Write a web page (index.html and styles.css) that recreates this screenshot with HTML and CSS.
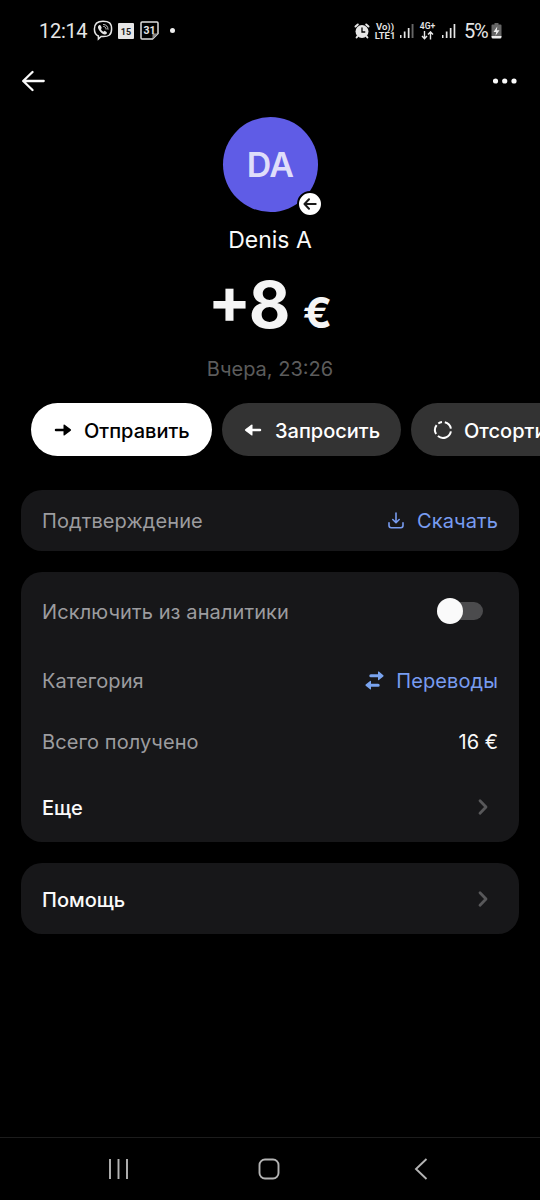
FILE: index.html
```html
<!DOCTYPE html>
<html lang="ru">
<head>
<meta charset="utf-8">
<title>Denis A</title>
<link rel="stylesheet" href="styles.css">
</head>
<body>
<div class="screen">
  <div class="status">
    <span class="clock">12:14</span>
    <svg class="s-viber" width="20" height="21" viewBox="0 0 20 21" fill="none" stroke="#e6e6e6" stroke-width="1.5" stroke-linecap="round">
      <path d="M10 1.300C4 1.300 1.400 3.500 1.400 9c0 3.700 1.200 5.900 4 7v3l2.700-2.500c7.500.7 10.500-1.500 10.500-7.500S16 1.300 10 1.300z"/>
      <path d="M6 5.200c-1.700 1-1.200 3.200.5 5.500s4.200 4.100 5.700 3.800c1.700-.3 2.200-1.800 1.300-2.500l-1.800-1.200-1.300.9c-1-.3-2.100-1.500-2.400-2.700l.8-1-1-2.300c-.4-.6-1.100-.9-1.800-.5z" fill="#e6e6e6" stroke="none"/>
      <path d="M10.500 4.500c3 .2 4.500 2 4.500 4.800M10.700 6.500c1.500.1 2.400 1.100 2.400 2.600" stroke-width=".9"/>
    </svg>
    <span class="cal-solid">15</span>
    <span class="cal31">
      <svg width="19" height="19" viewBox="0 0 19 19" fill="none" stroke="#dedede" stroke-width="1.500"><path d="M2.500 1h14.500q1 0 1 1v10.500l-5.500 5.500H2q-1 0-1-1V2q0-1 1-1z"/><path d="M18 12.500l-5.500 5.500v-5.500z" fill="#888" stroke="none"/></svg>
      <b>31</b>
    </span>
    <i class="dot"></i>
    <svg class="s-alarm" width="16" height="16" viewBox="0 0 16 16" fill="none" stroke="#e6e6e6" stroke-width="2" stroke-linecap="round">
      <circle cx="8" cy="8.500" r="6.500" fill="#e6e6e6" stroke="none"/><path d="M1.500 3.500l2.300-2M14.500 3.500l-2.300-2M3.600 13.200l-1 1.300M12.400 13.200l1 1.300"/><path d="M8 5v4h2.800" stroke="#000" stroke-width="1.300"/>
    </svg>
    <span class="net volte"><span>Vo))</span><span>LTE1</span></span>
    <svg class="sig" width="14" height="16" viewBox="0 0 14 16" fill="#e6e6e6"><path d="M0 12h1.500v3H0zM3.800 8.500h1.700V15H3.800zM7.800 5h1.700v10H7.800z"/><path d="M11.600 1h1.900v14h-1.900z" fill="#666"/></svg>
    <span class="net fourg"><span>4G+</span>
      <svg width="13" height="9" viewBox="0 0 13 9" fill="none" stroke="#e6e6e6" stroke-width="1.400"><path d="M3.500 0v7.500M1 5l2.500 2.700L6 5M9.500 8.500V1M7 3.500L9.500.9 12 3.500"/></svg></span>
    <svg class="sig" width="14" height="16" viewBox="0 0 14 16" fill="#e6e6e6"><path d="M0 12h1.500v3H0zM3.800 8.500h1.700V15H3.800zM7.800 5h1.700v10H7.800zM11.600 1h1.700v14h-1.700z"/></svg>
    <span class="pct">5%</span>
    <svg class="bat" width="11" height="16" viewBox="0 0 11 16"><path d="M3.500 0h4v1.500H9.500q1 0 1 1v11H.5v-11q0-1 1-1h2z" fill="#666"/><path d="M.5 13h10v1q0 1.500-1.500 1.500H2Q.5 15.500.5 14z" fill="#eee"/><path d="M6.300 3.500L2.500 9h2.700l-.7 3.700L8.500 7.300H5.800z" fill="#eee"/></svg>
  </div>

  <div class="topbar">
    <svg width="24" height="22" viewBox="0 0 24 22" fill="none" stroke="#fafafa" stroke-width="2.300" stroke-linecap="round" stroke-linejoin="round"><path d="M21.700 11H1.500M10.500 2L1.200 11l9.300 9"/></svg>
    <svg width="26" height="6" viewBox="0 0 26 6" fill="#fafafa"><circle cx="2.500" cy="3" r="2.600"/><circle cx="11.700" cy="3" r="2.600"/><circle cx="21" cy="3" r="2.600"/></svg>
  </div>

  <div class="avatar">DA
    <span class="badge"><svg width="14" height="12" viewBox="0 0 14 12" fill="none" stroke="#191919" stroke-width="2" stroke-linecap="round" stroke-linejoin="round"><path d="M12.700 6H1.700M6 1.300L1.500 6 6 10.700"/></svg></span>
  </div>
  <div class="name">Denis A</div>
  <div class="amount"><span class="big">+8</span><span class="cur">€</span></div>
  <div class="date">Вчера, 23:26</div>

  <div class="actions">
    <div class="btn send">
      <svg width="18" height="14" viewBox="0 0 18 14"><path d="M2 7h9" stroke="#000" stroke-width="2.500" stroke-linecap="round"/><path d="M9.500 2.300q0-1.300 1.200-.6l6 4.500q.9.800 0 1.600l-6 4.500q-1.200.7-1.200-.6z" fill="#000"/></svg>
      <span>Отправить</span></div>
    <div class="btn request">
      <svg width="18" height="14" viewBox="0 0 18 14"><path d="M7 7h9" stroke="#fff" stroke-width="2.500" stroke-linecap="round"/><path d="M8.500 2.300q0-1.300-1.200-.6l-6 4.500q-.9.800 0 1.600l6 4.500q1.200.7 1.200-.6z" fill="#fff"/></svg>
      <span>Запросить</span></div>
    <div class="btn sort">
      <svg width="20" height="20" viewBox="0 0 20 20" fill="none" stroke="#fff" stroke-width="2"><path d="M11.800 2.200A8 8 0 0 1 17.900 8.600M17.900 11.400A8 8 0 0 1 4.900 16.100M3.100 14.100A8 8 0 0 1 3.600 5.200M5.300 3.500A8 8 0 0 1 9 2.100"/></svg>
      <span>Отсортировать</span></div>
  </div>

  <div class="card">
    <div class="row r-confirm"><span>Подтверждение</span>
      <span class="link"><svg width="16" height="17" viewBox="0 0 16 17" fill="none" stroke="#789cf0" stroke-width="1.600" stroke-linecap="round" stroke-linejoin="round"><path d="M8 1v9.500M4.800 7.500L8 10.700l3.200-3.200M1 10.800v2.700q0 2.200 2.200 2.200h9.600q2.200 0 2.200-2.200v-2.700"/></svg><span>Скачать</span></span></div>
  </div>
  <div class="card">
    <div class="row r-excl"><span>Исключить из аналитики</span><span class="toggle"><i></i></span></div>
    <div class="row r-cat"><span>Категория</span>
      <span class="link cat"><svg width="19" height="19" viewBox="0 0 19 19" fill="#7aa4ef"><path d="M5.800 3.300H13V1q0-1 .9-.4l4.400 3.600q.7.600 0 1.200l-4.400 3.500q-.9.600-.9-.4V6.300H5.800q-1.500 0-1.500-1.500t1.500-1.500z"/><path d="M13.200 12.700H6v-2.300q0-1-.9-.4L.7 13.600q-.7.600 0 1.200l4.400 3.500q.9.600.9-.4v-2.200h7.200q1.500 0 1.500-1.500t-1.500-1.500z"/></svg><span>Переводы</span></span></div>
    <div class="row r-total"><span>Всего получено</span><span class="sum">16 €</span></div>
    <div class="row r-more"><span class="strong">Еще</span><svg class="chev" width="12" height="18" viewBox="0 0 12 18" fill="none" stroke="#58585a" stroke-width="2.800" stroke-linecap="round" stroke-linejoin="round"><path d="M3 2.800L9 9l-6 6.200"/></svg></div>
  </div>
  <div class="card">
    <div class="row r-help"><span class="strong">Помощь</span><svg class="chev" width="12" height="18" viewBox="0 0 12 18" fill="none" stroke="#58585a" stroke-width="2.800" stroke-linecap="round" stroke-linejoin="round"><path d="M3 2.800L9 9l-6 6.200"/></svg></div>
  </div>

  <div class="sysnav">
    <svg width="20" height="22" viewBox="0 0 20 22" stroke="#b4b4b4" stroke-width="1.900"><path d="M2 1v20M10.500 1v20M19 1v20"/></svg>
    <svg class="home" width="22" height="22" viewBox="0 0 22 22" fill="none" stroke="#b4b4b4" stroke-width="1.900"><rect x="1.500" y="1.500" width="19" height="19" rx="5.500"/></svg>
    <svg width="14" height="22" viewBox="0 0 14 22" fill="none" stroke="#b4b4b4" stroke-width="1.900"><path d="M12.500 1L2 11l10.500 10"/></svg>
  </div>
</div>
</body>
</html>
```
FILE: styles.css
```css
* { box-sizing: border-box; }
body { margin: 0; background: #000; font-family: Inter, "Liberation Sans", sans-serif; }
svg { display: block; flex: none; }
.screen { width: 540px; height: 1200px; overflow: hidden; display: flex; flex-direction: column; color: #fafafa; }

.status { height: 60px; padding: 1px 38px 0 39px; display: flex; align-items: center; font-family: Roboto, sans-serif; color: #e6e6e6; flex: none; white-space: nowrap; }
.clock { width: 48px; font-size: 20px; letter-spacing: -.3px; }
.s-viber { margin-left: 6px; }
.cal-solid { width: 16px; height: 16px; margin-left: 5px; background: #e6e6e6; color: #222; font-size: 9px; font-weight: 700; line-height: 18px; text-align: center; border-radius: 1px; }
.cal31 { display: grid; margin-left: 6px; place-items: center; }
.cal31 > * { grid-area: 1 / 1; }
.cal31 b { font-size: 10.500px; line-height: 12px; }
.dot { width: 5px; height: 5px; border-radius: 50%; background: #eee; margin-left: 11px; }
.s-alarm { margin-left: auto; }
.net { display: flex; flex-direction: column; align-items: center; font-size: 9.500px; line-height: 9px; font-weight: 600; }
.volte { width: 20px; margin-left: 5px; }
.sig { margin-left: 5px; }
.fourg { width: 17px; margin-left: 5px; font-size: 8.500px; }
.fourg + .sig { margin-left: 6px; }
.pct { width: 24px; margin-left: 8px; font-size: 20px; letter-spacing: -1.200px; }
.bat { margin-left: 3px; }

.topbar { height: 42px; padding: 0 21px 0 22px; display: flex; align-items: center; justify-content: space-between; flex: none; }

.avatar { position: relative; width: 95px; height: 95px; margin: 15px auto 0; border-radius: 50%; background: #5f5ce6; color: #dfdefa; font-size: 34px; font-weight: 600; letter-spacing: -.8px; line-height: 95px; text-align: center; flex: none; }
.badge { position: absolute; left: 74px; top: 74px; width: 26px; height: 26px; border: 2.500px solid #000; border-radius: 50%; background: #fff; display: flex; align-items: center; justify-content: center; }
.name { height: 30px; margin-top: 13px; text-align: center; font-size: 23px; line-height: 30px; flex: none; }
.amount { height: 76px; margin-top: 12px; display: flex; justify-content: center; align-items: baseline; font-weight: 700; line-height: 76px; color: #f5f5f5; flex: none; }
.big { font-size: 64px; letter-spacing: -2.500px; font-feature-settings: "case"; }
.cur { margin-left: 15px; font-size: 43px; }
.date { height: 26px; margin-top: 13px; text-align: center; font-size: 20px; line-height: 26px; color: #5c5c5c; flex: none; }

.actions { height: 53px; margin: 21px 0 34px; padding-left: 31px; display: flex; gap: 10px; overflow: hidden; flex: none; }
.btn { height: 53px; border-radius: 27px; background: #333; color: #fff; font-size: 20px; font-weight: 500; display: flex; align-items: center; flex: none; white-space: nowrap; }
.btn span { padding-top: 2px; }
.send { width: 181px; padding-left: 23px; gap: 12px; background: #fff; color: #000; }
.request { width: 179px; padding-left: 22px; gap: 13px; }
.sort { width: 230px; padding-left: 22px; gap: 11px; }

.card { margin: 0 21px 21px; border-radius: 21px; background: #171719; flex: none; }
.row { padding: 1px 21px 0; display: flex; align-items: center; justify-content: space-between; font-size: 20px; letter-spacing: .1px; color: #9c9c9f; white-space: nowrap; }
.r-confirm { height: 61px; }
.r-excl { height: 78px; }
.r-cat { height: 62px; padding-top: 0; }
.r-total { height: 60px; padding-top: 0; }
.r-more { height: 70px; padding-top: 2px; }
.r-help { height: 71px; padding-top: 2px; }
.strong { color: #fafafa; font-weight: 500; letter-spacing: 0; }
.sum { color: #fafafa; letter-spacing: 0; }
.link { display: flex; align-items: center; gap: 13px; color: #789cf0; }
.link.cat { gap: 12px; }
.link svg { margin-top: -1px; }
.toggle { width: 46px; height: 18px; margin: -2px 15px 0 0; display: flex; align-items: center; background: #4b4b4d; border-radius: 9px; }
.toggle i { width: 26px; height: 26px; border-radius: 50%; background: #fafafa; flex: none; }
.chev { margin: -2px 9px 0 0; }

.sysnav { height: 63px; margin-top: auto; padding: 0 112px 0 108px; border-top: 1.500px solid #1c1c1c; display: flex; align-items: center; justify-content: space-between; flex: none; }
.home { margin-left: -4px; }
```
